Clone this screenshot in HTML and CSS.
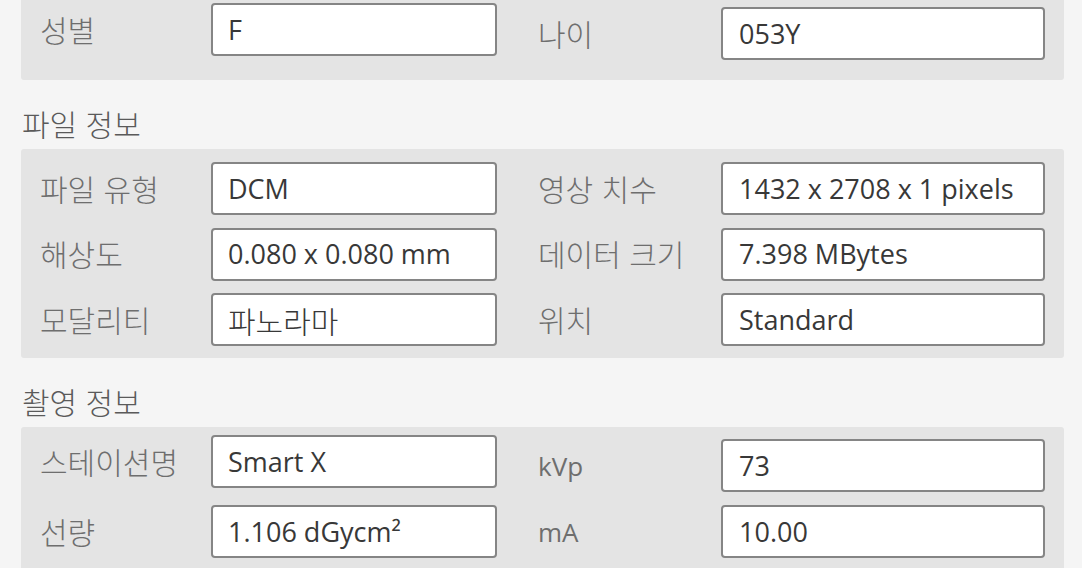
FILE: index.html
```html
<!DOCTYPE html>
<html lang="ko">
<head>
<meta charset="utf-8">
<title>영상 정보</title>
<link rel="stylesheet" href="styles.css">
</head>
<body>
<div class="page">
  <section class="panel panel--first">
    <div class="row">
      <div class="field"><span class="label">성별</span><div class="value">F</div></div>
      <div class="field field--right field--low"><span class="label">나이</span><div class="value">053Y</div></div>
    </div>
  </section>

  <h2 class="heading">파일 정보</h2>
  <section class="panel panel--file">
    <div class="row">
      <div class="field"><span class="label">파일 유형</span><div class="value">DCM</div></div>
      <div class="field field--right"><span class="label">영상 치수</span><div class="value">1432 x 2708 x 1 pixels</div></div>
    </div>
    <div class="row">
      <div class="field"><span class="label">해상도</span><div class="value">0.080 x 0.080 mm</div></div>
      <div class="field field--right"><span class="label">데이터 크기</span><div class="value">7.398 MBytes</div></div>
    </div>
    <div class="row">
      <div class="field"><span class="label">모달리티</span><div class="value value--ko">파노라마</div></div>
      <div class="field field--right"><span class="label">위치</span><div class="value">Standard</div></div>
    </div>
  </section>

  <h2 class="heading">촬영 정보</h2>
  <section class="panel panel--shot">
    <div class="row">
      <div class="field"><span class="label">스테이션명</span><div class="value">Smart X</div></div>
      <div class="field field--right field--low"><span class="label label--latin">kVp</span><div class="value">73</div></div>
    </div>
    <div class="row">
      <div class="field"><span class="label">선량</span><div class="value">1.106 dGycm²</div></div>
      <div class="field field--right"><span class="label label--latin">mA</span><div class="value">10.00</div></div>
    </div>
  </section>
</div>
</body>
</html>
```

FILE: styles.css
```css
html, body {
  margin: 0;
  padding: 0;
}

body {
  background: #f5f5f5;
  font-family: "Open Sans", "Noto Sans CJK KR", sans-serif;
  overflow: hidden;
}

.page {
  width: 1043px;
  margin-left: 21px;
  margin-top: -10px;
}

.panel {
  background: #e4e4e4;
  border-radius: 3px;
  display: flex;
  flex-direction: column;
  padding: 13px 19px 12px;
}

.panel--first {
  padding-bottom: 20px;
}

.panel--file {
  gap: 12.5px;
}

.panel--shot {
  padding-top: 8px;
  gap: 13px;
  padding-bottom: 40px;
}

.row {
  display: flex;
  align-items: flex-start;
}

.field {
  display: flex;
  align-items: center;
}

.field--right {
  margin-left: 41px;
}

.field--low {
  margin-top: 4px;
}

.label {
  width: 171px;
  font-family: "Noto Sans CJK KR", "Open Sans", sans-serif;
  font-weight: 300;
  font-size: 30px;
  line-height: 36px;
  color: #6e6e6e;
  margin-top: -2px;
}

.label--latin {
  font-family: "Open Sans", sans-serif;
  font-weight: 400;
  font-size: 26px;
  margin-top: 0;
}

.field--right .label {
  width: 183px;
}

.value {
  box-sizing: border-box;
  width: 286px;
  height: 53px;
  border: 2px solid #858585;
  border-radius: 4px;
  background: #fff;
  padding: 0 0 0 15px;
  font-size: 27px;
  line-height: 34px;
  color: #383838;
  display: flex;
  align-items: center;
  white-space: nowrap;
}

.value--ko {
  font-family: "Noto Sans CJK KR", sans-serif;
  font-weight: 300;
  font-size: 30px;
}

.field--right .value {
  width: 324px;
  padding-left: 16px;
}

.heading {
  margin: 0;
  box-sizing: border-box;
  height: 69px;
  padding: 25px 0 0 1px;
  font-family: "Noto Sans CJK KR", sans-serif;
  font-weight: 300;
  font-size: 30px;
  line-height: 36px;
  color: #5a5a5a;
}
```
